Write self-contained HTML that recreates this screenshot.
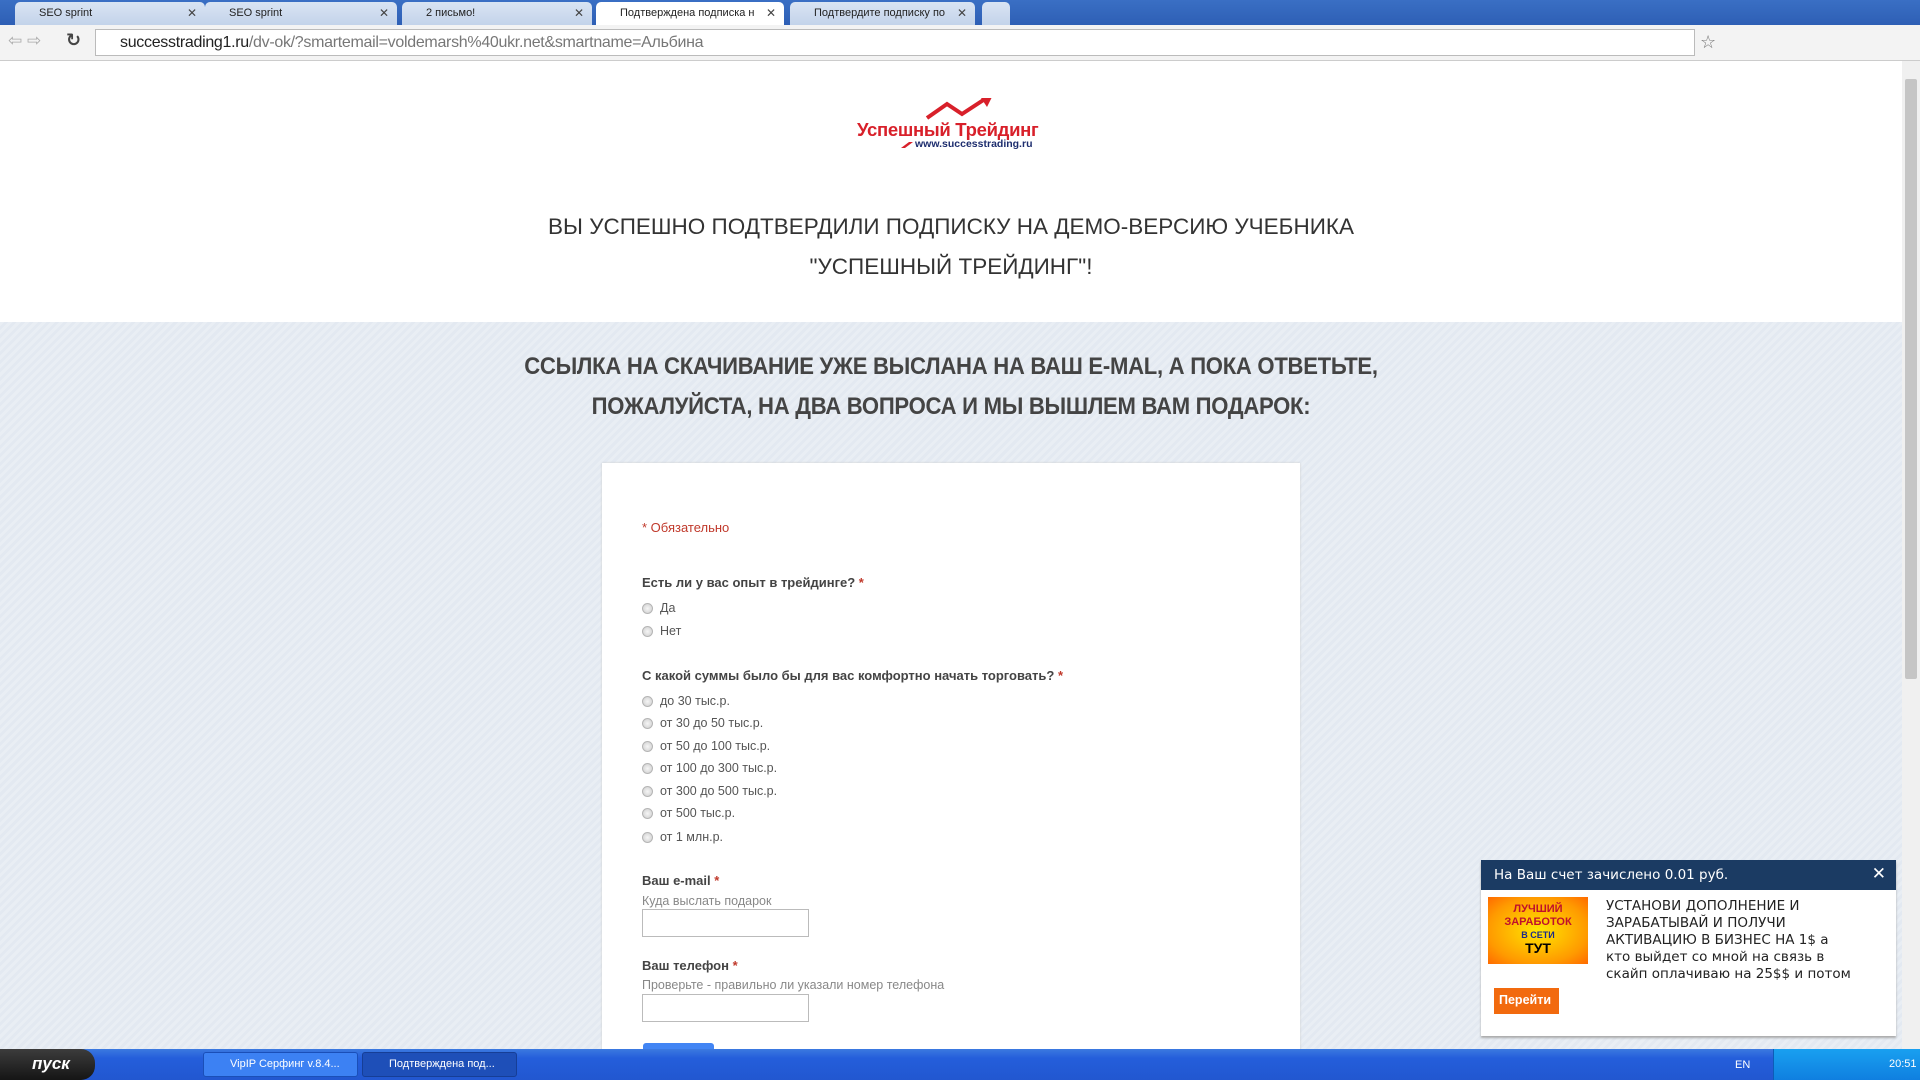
<!DOCTYPE html>
<html><head><meta charset="utf-8">
<style>
*{margin:0;padding:0;box-sizing:border-box}
body{width:1920px;height:1080px;overflow:hidden;position:relative;font-family:"Liberation Sans","DejaVu Sans",sans-serif;background:#fff}
.abs{position:absolute}
#tabs{left:0;top:0;width:1920px;height:25px;background:linear-gradient(#3a6fc4,#2e5fb5)}
.tab{position:absolute;top:2px;height:23px;background:linear-gradient(#d9e4f3,#c3d3ea);border-radius:5px 5px 0 0;font-size:11px;color:#222;padding:5px 0 0 24px;white-space:nowrap;overflow:hidden}
.tab.act{background:#fff}
.tab .x{position:absolute;right:8px;top:4px;font-size:12px;color:#444}
#addr{left:0;top:25px;width:1920px;height:36px;background:#f3f3f3;border-bottom:1px solid #ccc}
#url{left:95px;top:29px;width:1600px;height:27px;background:#fff;border:1px solid #bbb;font-size:16px;padding:4px 0 0 24px;color:#222;letter-spacing:-0.3px}
#gray{left:0;top:322px;width:1902px;height:728px;background:repeating-linear-gradient(135deg,#e9eef4 0 3px,#e3e9f1 3px 6px)}
h1{position:absolute;left:0;width:1902px;text-align:center;font-weight:normal;font-size:22.5px;color:#333;line-height:40px}
h2{position:absolute;left:0;width:1902px;text-align:center;font-size:24px;color:#444;line-height:40px;letter-spacing:-0.3px;transform:scaleX(0.92)}
#card{left:602px;top:463px;width:698px;height:600px;background:#fff;box-shadow:0 0 2px #ccc}
.t{position:absolute;left:642px;font-size:13px;color:#444;white-space:nowrap}
.q{font-weight:bold;color:#444}
.r{color:#c0392b}
.opt{position:absolute;left:642px;font-size:12.5px;color:#555;white-space:nowrap;padding-left:18px}
.opt:before{content:"";position:absolute;left:0;top:2px;width:11px;height:11px;border-radius:50%;background:radial-gradient(#f6f6f6,#ccc);border:1px solid #b5b5b5;box-sizing:border-box}
.inp{position:absolute;left:642px;width:167px;height:28px;border:1px solid #bbb;background:#fff}
#sb{left:1902px;top:61px;width:18px;height:989px;background:#f0f0f0}
#task{left:0;top:1049px;width:1920px;height:31px;background:linear-gradient(#3b79e0,#245edb 30%,#2257d0)}
#popup{left:1481px;top:860px;width:415px;height:176px;background:#fff;box-shadow:0 2px 2px #aaa;font-family:"DejaVu Sans",sans-serif}
</style></head><body>
<div id="tabs" class="abs">
 <div class="tab" style="left:15px;width:190px">SEO sprint<span class="x">✕</span></div>
 <div class="tab" style="left:205px;width:192px">SEO sprint<span class="x">✕</span></div>
 <div class="tab" style="left:402px;width:190px">2 письмо!<span class="x">✕</span></div>
 <div class="tab act" style="left:596px;width:188px">Подтверждена подписка н<span class="x">✕</span></div>
 <div class="tab" style="left:790px;width:185px">Подтвердите подписку по<span class="x">✕</span></div>
 <div class="tab" style="left:982px;width:28px;padding:0"></div>
</div>
<div id="addr" class="abs"><span class="abs" style="left:8px;top:6px;color:#aaa;font-size:17px">⇦ ⇨</span><span class="abs" style="left:66px;top:5px;color:#444;font-size:18px;font-weight:bold">↻</span></div>
<div id="url" class="abs">successtrading1.ru<span style="color:#777">/dv-ok/?smartemail=voldemarsh%40ukr.net&amp;smartname=Альбина</span></div>
<div class="abs" style="left:1700px;top:32px;font-size:18px;color:#777">☆</div>

<div class="abs" style="left:855px;top:98px;width:190px;height:52px">
<svg width="190" height="52"><polyline points="72,20 92,6 107,16 130,1" fill="none" stroke="#d8202a" stroke-width="4"/><polygon points="124,-3 138,-3 132,9" fill="#d8202a"/><polygon points="46,50 54,44 58,44 50,50" fill="#d8202a"/></svg>
<div class="abs" style="left:2px;top:21px;font-size:18.5px;font-weight:bold;color:#d8202a;white-space:nowrap;letter-spacing:-0.3px">Успешный Трейдинг</div>
<div class="abs" style="left:60px;top:40px;font-size:10.5px;font-weight:bold;color:#1d2d6e;white-space:nowrap">www.successtrading.ru</div>
</div>
<h1 style="top:207px">ВЫ УСПЕШНО ПОДТВЕРДИЛИ ПОДПИСКУ НА ДЕМО-ВЕРСИЮ УЧЕБНИКА<br>"УСПЕШНЫЙ ТРЕЙДИНГ"!</h1>
<div id="gray" class="abs"></div>
<h2 style="top:347px">ССЫЛКА НА СКАЧИВАНИЕ УЖЕ ВЫСЛАНА НА ВАШ E-MAL, А ПОКА ОТВЕТЬТЕ,<br>ПОЖАЛУЙСТА, НА ДВА ВОПРОСА И МЫ ВЫШЛЕМ ВАМ ПОДАРОК:</h2>
<div id="card" class="abs"></div>
<div class="t r" style="top:520px">* Обязательно</div>
<div class="t q" style="top:575px">Есть ли у вас опыт в трейдинге? <span class="r">*</span></div>
<div class="opt" style="top:601px">Да</div>
<div class="opt" style="top:624px">Нет</div>
<div class="t q" style="top:668px">С какой суммы было бы для вас комфортно начать торговать? <span class="r">*</span></div>
<div class="opt" style="top:694px">до 30 тыс.р.</div>
<div class="opt" style="top:716px">от 30 до 50 тыс.р.</div>
<div class="opt" style="top:739px">от 50 до 100 тыс.р.</div>
<div class="opt" style="top:761px">от 100 до 300 тыс.р.</div>
<div class="opt" style="top:784px">от 300 до 500 тыс.р.</div>
<div class="opt" style="top:806px">от 500 тыс.р.</div>
<div class="opt" style="top:830px">от 1 млн.р.</div>
<div class="t q" style="top:873px">Ваш e-mail <span class="r">*</span></div>
<div class="t" style="top:894px;color:#888;font-size:12.5px">Куда выслать подарок</div>
<div class="inp" style="top:909px"></div>
<div class="t q" style="top:958px">Ваш телефон <span class="r">*</span></div>
<div class="t" style="top:978px;color:#888;font-size:12.5px">Проверьте - правильно ли указали номер телефона</div>
<div class="inp" style="top:994px"></div>
<div class="abs" style="left:643px;top:1043px;width:71px;height:10px;background:#4285f4;border-radius:3px 3px 0 0"></div>
<div id="sb" class="abs"><div class="abs" style="left:3px;top:18px;width:12px;height:600px;background:#c5c5c5;border-radius:2px"></div></div>

<div id="popup" class="abs">
 <div class="abs" style="left:0;top:0;width:415px;height:30px;background:#1b3b63;color:#fff;font-size:13.5px;padding:7px 0 0 13px">На Ваш счет зачислено 0.01 руб.<span class="abs" style="right:10px;top:4px;font-size:17px;font-weight:bold">✕</span></div>
 <div class="abs" style="left:7px;top:37px;width:100px;height:67px;background:radial-gradient(#ffe600,#ff9a00 70%,#ff6a00);text-align:center;font-weight:bold;font-size:11px;line-height:13px;padding-top:6px;font-family:'Liberation Sans',sans-serif"><span style="color:#c0102b">ЛУЧШИЙ<br>ЗАРАБОТОК</span><br><span style="color:#1b2a8a;font-size:9px">В СЕТИ</span><br><span style="color:#000;font-size:14px">ТУТ</span></div>
 <div class="abs" style="left:125px;top:38px;font-size:13.5px;line-height:17px;color:#222;white-space:nowrap">УСТАНОВИ ДОПОЛНЕНИЕ И<br>ЗАРАБАТЫВАЙ И ПОЛУЧИ<br>АКТИВАЦИЮ В БИЗНЕС НА 1$ а<br>кто выйдет со мной на связь в<br>скайп оплачиваю на 25$$ и потом</div>
 <div class="abs" style="left:13px;top:128px;width:65px;height:26px;background:#f26a0e;color:#fff;font-weight:bold;font-size:12.5px;padding:5px 0 0 5px;font-family:'Liberation Sans',sans-serif">Перейти</div>
</div>

<div id="task" class="abs">
 <div class="abs" style="left:0;top:0;width:95px;height:31px;background:linear-gradient(#3c3c3c,#151515);border-radius:0 14px 14px 0;color:#fff;font-style:italic;font-weight:bold;font-size:17px;padding:5px 0 0 32px">пуск</div>
 <div class="abs" style="left:203px;top:3px;width:155px;height:25px;background:#3c81f3;border:1px solid #1a4fb8;border-radius:3px;color:#fff;font-size:11px;padding:5px 0 0 26px">VipIP Серфинг v.8.4...</div>
 <div class="abs" style="left:362px;top:3px;width:155px;height:25px;background:#1e4fb8;border:1px solid #163e96;border-radius:3px;color:#fff;font-size:11px;padding:5px 0 0 26px">Подтверждена под...</div>
 <div class="abs" style="left:1735px;top:10px;color:#fff;font-size:11px">EN</div>
 <div class="abs" style="left:1773px;top:0;width:147px;height:31px;background:linear-gradient(#19a0f0,#0f7fe0);border-left:1px solid #0c5db8;color:#fff;font-size:11px;padding:9px 0 0 115px">20:51</div>
</div>
</body></html>
